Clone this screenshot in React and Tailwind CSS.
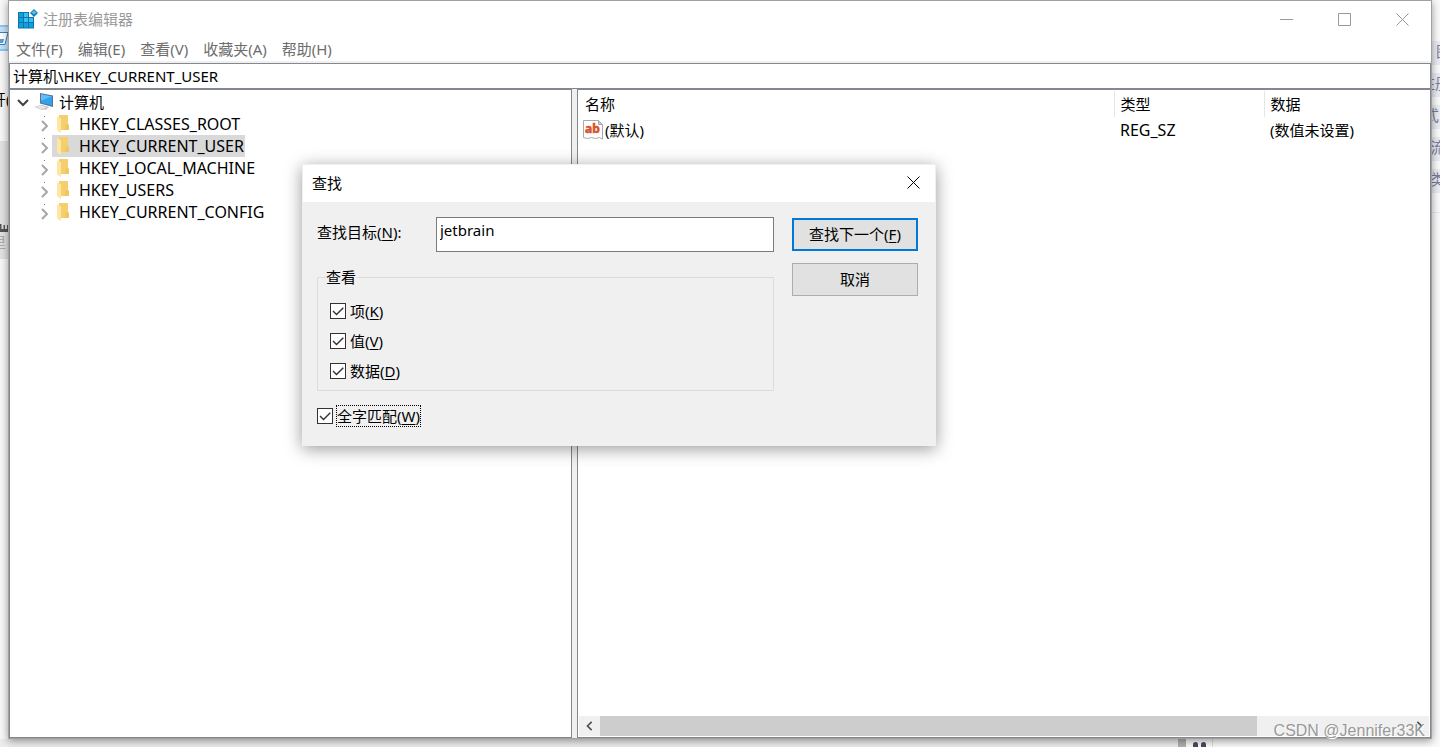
import React from "react";

const FONT = "font-['Noto_Sans','Noto_Sans_CJK_SC',sans-serif]";

const MENUS = ["文件(F)", "编辑(E)", "查看(V)", "收藏夹(A)", "帮助(H)"];
const KEYS = [
  "HKEY_CLASSES_ROOT",
  "HKEY_CURRENT_USER",
  "HKEY_LOCAL_MACHINE",
  "HKEY_USERS",
  "HKEY_CURRENT_CONFIG",
];
const TAGS = [
  { text: "图", indent: "pl-1" },
  { text: "注册", indent: "-ml-3" },
  { text: "式", indent: "-ml-2" },
  { text: "流", indent: "-ml-[2px]" },
  { text: "类", indent: "-ml-[2px]" },
];

function RegistryIcon() {
  return (
    <svg className="size-5" viewBox="0 0 20 20" aria-hidden="true">
      <path fill="#0a76b0" d="M0 3h11v5h5v11.500H0z" />
      <path fill="#12a0dc" d="M1 4h4v4H1zM1 9h4v4H1zM1 14h4v4.500H1zM6 14h4v4.500H6zM11 14h4v4.500h-4z" />
      <path fill="#3cc0f0" d="M6 4h4v4H6zM6 9h4v4H6zM11 9h4v4h-4z" />
      <path fill="#0f7fb8" d="M16 0l4 4-4 4-4-4z" />
      <path fill="#5fbfe6" d="M16 1.400l2.400 2.200L16 5.600l-2.400-2z" />
    </svg>
  );
}

function ComputerIcon() {
  return (
    <svg className="size-5" viewBox="0 0 20 20" aria-hidden="true">
      <path fill="#5c7186" d="M6 1L19 3.500V15L6 11.500z" />
      <path fill="#2ea3f2" d="M7 2.200L18 4.500V13.600L7 10.700z" />
      <path fill="#62bdf8" d="M7 2.200L18 4.500 7 8.500z" />
      <path fill="#b9c0c6" d="M9 13.500l6 1.500-3 2.800-5-1z" />
      <path fill="#c5ccd2" d="M0 15L7 12.800l8 2.400-7 2.800z" />
      <path fill="#e6e9ec" d="M2 15l5-1.500 5.500 1.700-4.800 1.800z" />
    </svg>
  );
}

function FolderIcon() {
  return (
    <svg className="h-[18px] w-3" viewBox="0 0 12 18" aria-hidden="true">
      <path fill="#f5cf6e" d="M2 0h9v9l1 1v5H4L2 13z" />
      <path fill="#e9bd55" d="M8 10l3-1 1 1v5H8z" opacity=".5" />
      <path fill="#ffe7a3" d="M0 1l4 2.500V18L0 15.500z" />
    </svg>
  );
}

function StringIcon() {
  return (
    <svg className="size-5 shrink-0" viewBox="0 0 20 20" aria-hidden="true">
      <path fill="#fff" stroke="#a9a9a9" d="M.5.5h15l4 4v14.500l-3-1.500-4 1-4-1-4 1-4-1z" />
      <path fill="#ccc" stroke="#a9a9a9" d="M15.500.5v4h4z" />
      <text x="2" y="13" fill="#d9532c" stroke="#d9532c" strokeWidth=".6" fontSize="12" fontWeight="700" fontFamily="Noto Sans">ab</text>
    </svg>
  );
}

function Chevron({ d, className }) {
  return (
    <svg className={className} viewBox="0 0 12 12" fill="none" stroke="currentColor" strokeWidth="2" aria-hidden="true">
      <path d={d} />
    </svg>
  );
}

function Glyph({ d }) {
  return (
    <svg className="size-[13px]" viewBox="0 0 13 13" fill="none" stroke="currentColor" aria-hidden="true">
      <path d={d} />
    </svg>
  );
}

function WindowButton({ label, d }) {
  return (
    <button type="button" aria-label={label} className="flex h-full w-[58px] items-center justify-center">
      <Glyph d={d} />
    </button>
  );
}

function Check({ id, label, accel, focused }) {
  return (
    <div className="flex items-center gap-1">
      <span className="grid size-4 shrink-0">
        <input
          id={id}
          type="checkbox"
          defaultChecked
          className="peer col-start-1 row-start-1 size-4 appearance-none border border-[#333] bg-white"
        />
        <svg
          className="pointer-events-none invisible col-start-1 row-start-1 size-4 text-[#333] peer-checked:visible"
          viewBox="0 0 16 16"
          fill="none"
          stroke="currentColor"
          strokeWidth="1.400"
          aria-hidden="true"
        >
          <path d="M3 8l3.500 3.500L13.300 4.700" />
        </svg>
      </span>
      <label htmlFor={id} className={focused ? "leading-5 outline outline-1 outline-dotted outline-black" : "leading-5"}>
        {label}(<u className="underline-offset-2">{accel}</u>)
      </label>
    </div>
  );
}

function FindDialog() {
  return (
    <section
      role="dialog"
      aria-label="查找"
      className="absolute top-[164px] left-[302px] z-20 w-[634px] border border-[#f0f0f0] bg-[#f0f0f0] shadow-[0_3px_16px_rgba(0,0,0,0.4)]"
    >
      <header className="flex h-[37px] items-center justify-between bg-white pr-[15px] pb-[2px] pl-[9px]">
        <h2>查找</h2>
        <button type="button" aria-label="关闭"><Glyph d="M.5.5l12 12M12.500.5l-12 12" /></button>
      </header>
      <div className="flex gap-[18px] px-[14px] pt-[15px] pb-[19px]">
        <div className="w-[457px]">
          <div className="flex items-center">
            <label htmlFor="target" className="w-[119px] pb-[6px]">
              查找目标(<u className="underline-offset-2">N</u>):
            </label>
            <input
              id="target"
              type="text"
              defaultValue="jetbrain"
              className="h-[35px] min-w-0 flex-1 border border-[#7a7a7a] bg-white px-[3px] pb-[10px]"
            />
          </div>
          <fieldset className="mt-[15px] flex h-[124px] flex-col border border-[#dcdcdc] px-3">
            <legend className="-ml-[5px] px-px leading-5">查看</legend>
            <div className="flex flex-col gap-[10px] pt-[14px]">
              <Check id="keys" label="项" accel="K" />
              <Check id="values" label="值" accel="V" />
              <Check id="data" label="数据" accel="D" />
            </div>
          </fieldset>
          <div className="mt-[15px]">
            <Check id="whole" label="全字匹配" accel="W" focused />
          </div>
        </div>
        <div className="flex w-[126px] flex-col gap-3 pt-px">
          <button type="button" className="h-[33px] border-2 border-[#0078d7] bg-[#e1e1e1] pb-[2px]">
            查找下一个(<u className="underline-offset-2">F</u>)
          </button>
          <button type="button" className="h-[33px] border border-[#adadad] bg-[#e1e1e1] pb-[2px]">取消</button>
        </div>
      </div>
    </section>
  );
}

function KeyTree() {
  return (
    <nav aria-label="计算机" className="w-[563px] shrink-0 border border-[#828790] pt-px pl-[7px]">
      <button type="button" className="flex h-[22px] items-center gap-[5px]">
        <Chevron d="M1 4l5 5 5-5" className="size-3 text-[#404040]" />
        <ComputerIcon />
        <span>计算机</span>
      </button>
      <ul>
        {KEYS.map((name) => (
          <li key={name} className="flex h-[22px] items-center pl-5">
            <span className="flex w-[15px] flex-col items-center">
              <span className="mb-[3px] size-px bg-[#777]" />
              <Chevron d="M3 1l5 5-5 5" className="size-3 text-[#a6a6a6]" />
            </span>
            <button
              type="button"
              className={
                name === "HKEY_CURRENT_USER"
                  ? "flex h-[22px] items-center gap-[10px] bg-[#d9d9d9] pr-px pl-[5px] text-base leading-5"
                  : "flex h-[22px] items-center gap-[10px] pr-px pl-[5px] text-base leading-5"
              }
            >
              <FolderIcon />
              {name}
            </button>
          </li>
        ))}
      </ul>
    </nav>
  );
}

function Values() {
  return (
    <main className="flex min-w-0 flex-1 flex-col border border-[#828790]">
      <table className="mt-px w-full table-fixed text-left">
        <colgroup>
          <col />
          <col className="w-[150px]" />
          <col className="w-[166px]" />
        </colgroup>
        <thead>
          <tr className="h-[26px]">
            <th className="border-r border-[#e5e5e5] pl-[7px] font-normal">名称</th>
            <th className="border-r border-[#e5e5e5] pl-[6px] font-normal">类型</th>
            <th className="pl-[6px] font-normal">数据</th>
          </tr>
        </thead>
        <tbody>
          <tr className="h-[26px]">
            <td className="pl-[5px]">
              <span className="flex items-center gap-[2px]"><StringIcon />(默认)</span>
            </td>
            <td className="pl-[6px] text-base leading-5">REG_SZ</td>
            <td className="pl-[6px]">(数值未设置)</td>
          </tr>
        </tbody>
      </table>
      <div className="mx-px mt-auto mb-px flex h-5 items-center bg-[#f0f0f0]">
        <button type="button" aria-label="向左" className="flex h-full w-[21px] items-center justify-center">
          <Chevron d="M8 1L3 6l5 5" className="size-[10px] text-[#505050]" />
        </button>
        <div className="flex h-full flex-1"><div className="h-full w-13/16 bg-[#cdcdcd]" /></div>
        <button type="button" aria-label="向右" className="flex h-full w-5 items-center justify-center">
          <Chevron d="M4 1l5 5-5 5" className="size-[10px] text-[#505050]" />
        </button>
      </div>
    </main>
  );
}

function LeftBackdrop() {
  return (
    <aside className="flex w-2 shrink-0 flex-col overflow-hidden bg-[#f8f8f8] whitespace-nowrap">
      <svg className="mt-[25px] h-[26px] w-2 shrink-0" viewBox="0 0 8 26" aria-hidden="true">
        <path fill="#8cc8f5" d="M0 0h8v26H0z" />
        <path fill="#c2e2fa" d="M0 2h8v22H0z" />
        <path fill="#fff" stroke="#3d7fc0" d="M-2 7.500H8L5 19.500H-2z" />
        <path fill="#5b9bd5" d="M-1 14h5l-1 4h-4z" />
      </svg>
      <span className="mt-[38px] -ml-[9px]">开(</span>
      <div className="mt-8 h-[118px] shrink-0 bg-[#e2e2e2] pt-[83px]">
        <svg className="h-2 w-2" viewBox="0 0 8 8" aria-hidden="true">
          <path fill="#555" d="M0 0h1.500v5h2V1h1.500v4h2V1H8v7H0z" />
        </svg>
        <span className="-ml-[9px] text-[#aaa]">里</span>
      </div>
    </aside>
  );
}

function RightBackdrop() {
  return (
    <aside className="flex w-2 shrink-0 flex-col overflow-hidden bg-[#fafafa] whitespace-nowrap">
      <div className="mt-[41px] flex flex-col gap-2 border-b border-[#e8e8ee] pb-[19px] text-[#7c7c9c]">
        {TAGS.map((tag) => (
          <div key={tag.text} className="h-6 bg-[#e9ecf2]">
            <div className={tag.indent}>{tag.text}</div>
          </div>
        ))}
      </div>
    </aside>
  );
}

export default function App() {
  return (
    <div className={`${FONT} relative flex h-screen flex-col overflow-hidden bg-[#f3f3f3] text-[15px] leading-5 text-black`}>
      <div className="flex min-h-0 flex-1">
        <LeftBackdrop />
        <div className="relative z-10 flex min-w-0 flex-1 flex-col border border-[#a0a0a0] bg-white shadow-[0_2px_8px_rgba(0,0,0,0.4)]">
          <header className="flex h-9 shrink-0 items-center pl-[9px] text-[#999]">
            <RegistryIcon />
            <h1 className="ml-[5px] flex-1 pb-px">注册表编辑器</h1>
            <WindowButton label="最小化" d="M0 6.500h13" />
            <WindowButton label="最大化" d="M.5.5h12v12H.5z" />
            <WindowButton label="关闭" d="M.5.5l12 12M12.500.5l-12 12" />
          </header>
          <nav className="flex h-6 shrink-0 items-center gap-[15px] pl-[7px] text-[#6d6d6d]">
            {MENUS.map((m) => <button key={m} type="button">{m}</button>)}
          </nav>
          <div className="h-[2px] shrink-0 bg-[#f0f0f0]" />
          <input
            aria-label="路径"
            defaultValue="计算机\HKEY_CURRENT_USER"
            className="h-[26px] shrink-0 border border-[#828790] px-[3px] pb-[2px]"
          />
          <div className="flex min-h-0 flex-1">
            <KeyTree />
            <div className="w-[5px] shrink-0 bg-[#f0f0f0]" />
            <Values />
          </div>
        </div>
        <RightBackdrop />
      </div>
      <footer className="flex h-2 shrink-0 bg-[#fafafa]">
        <div className="flex-1 bg-[#ececec]" />
        <div className="w-2 bg-[#b0b0b0]" />
        <div className="flex w-[27px] items-end gap-[3px] border-r border-[#ddd] pl-[7px]">
          <span className="h-[5px] w-[5px] rounded-t-full bg-[#4a4a60]" />
          <span className="h-[5px] w-[5px] rounded-t-full bg-[#4a4a60]" />
        </div>
        <div className="w-[227px]" />
      </footer>
      <FindDialog />
      <p className="pointer-events-none absolute right-[15px] bottom-[6px] z-30 font-['Liberation_Sans',sans-serif] text-base leading-5 text-[#999] [text-shadow:1px_1px_0_#fff]">
        CSDN @Jennifer33K
      </p>
    </div>
  );
}
